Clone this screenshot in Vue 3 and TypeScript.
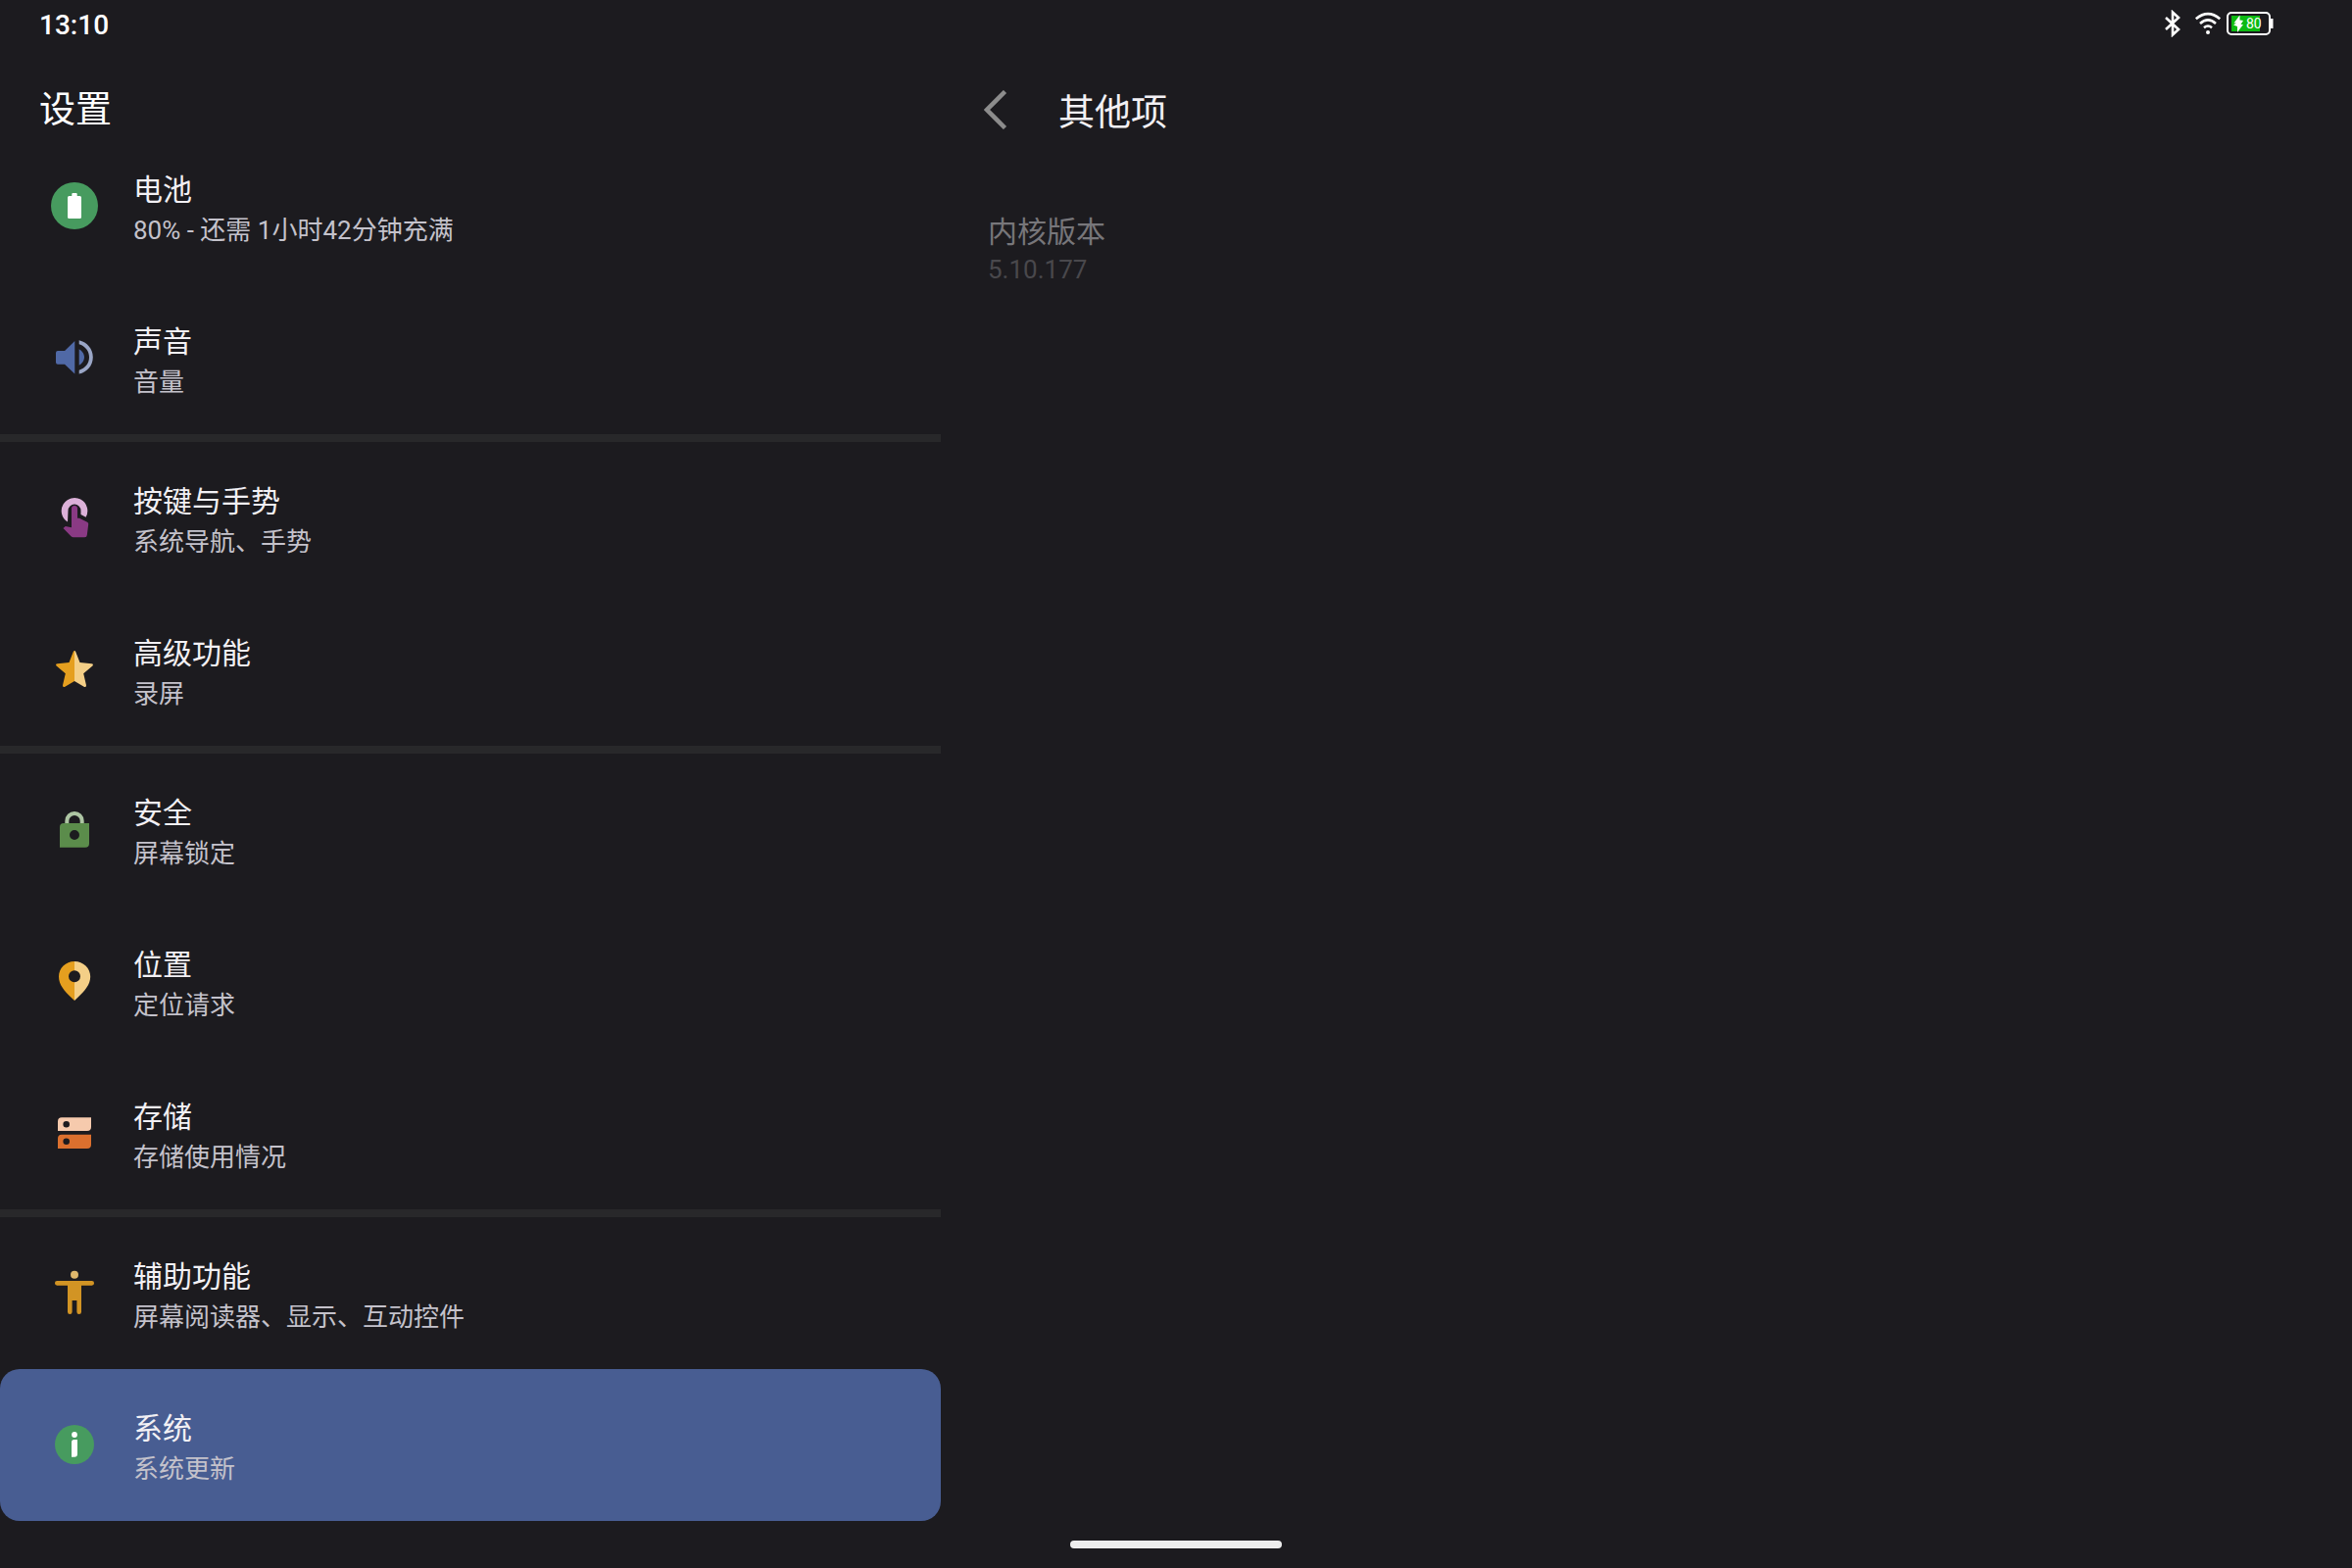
<script setup lang="ts">
import { ref } from 'vue'

type IconName =
  | 'battery' | 'sound' | 'gesture' | 'star' | 'lock'
  | 'location' | 'storage' | 'accessibility' | 'info'

interface SettingItem {
  icon: IconName
  title: string
  summary: string
}

const groups: SettingItem[][] = [
  [
    { icon: 'battery', title: '电池', summary: '80% - 还需 1小时42分钟充满' },
    { icon: 'sound', title: '声音', summary: '音量' },
  ],
  [
    { icon: 'gesture', title: '按键与手势', summary: '系统导航、手势' },
    { icon: 'star', title: '高级功能', summary: '录屏' },
  ],
  [
    { icon: 'lock', title: '安全', summary: '屏幕锁定' },
    { icon: 'location', title: '位置', summary: '定位请求' },
    { icon: 'storage', title: '存储', summary: '存储使用情况' },
  ],
  [
    { icon: 'accessibility', title: '辅助功能', summary: '屏幕阅读器、显示、互动控件' },
    { icon: 'info', title: '系统', summary: '系统更新' },
  ],
]

const selected = ref<IconName>('info')
</script>

<template>
  <div class="screen">
    <header class="status">
      <time class="clock">13:10</time>
      <div class="indicators">
        <svg class="bluetooth" viewBox="0 0 18 28" aria-hidden="true">
          <path d="M2 8 15 20 9 25.500V2.500L15 8 2 20" fill="none" stroke="#fff" stroke-width="2.600" />
        </svg>
        <svg class="wifi" viewBox="0 0 28 24" aria-hidden="true">
          <g fill="none" stroke="#fff" stroke-width="2.600">
            <path d="M1.800 7.200Q14-3 26.200 7.200" />
            <path d="M6 12Q14 4.800 22 12" />
            <path d="M10 16.200Q14 12.800 18 16.200" />
          </g>
          <circle cx="14" cy="21" r="2" fill="#fff" />
        </svg>
        <svg class="power" viewBox="0 0 48 26" aria-hidden="true">
          <rect x="1" y="2" width="43" height="22" rx="4" fill="none" stroke="#fff" stroke-width="2" />
          <path d="M45 8h2.500v10H45z" fill="#fff" />
          <path d="M5 5h29v16H5z" fill="#0dba12" />
          <path d="M13.500 4.500 7.500 12.500h2.500L7 14.500l4 1.500v6l6-8h-2.500l2.500-4-3.500-.500z" fill="#fff" />
          <text x="20" y="18" font-size="14" fill="#fff">80</text>
        </svg>
      </div>
    </header>

    <div class="panes">
      <nav class="sidebar" aria-label="设置">
        <h1 class="heading">设置</h1>
        <ul v-for="(group, index) in groups" :key="index" class="group">
          <li v-for="item in group" :key="item.icon">
            <button
              type="button"
              class="row"
              :class="{ active: selected === item.icon }"
              @click="selected = item.icon"
            >
              <svg class="icon" viewBox="0 0 48 48" aria-hidden="true">
                <g v-if="item.icon === 'battery'">
                  <circle cx="24" cy="24" r="24" fill="#479b5f" />
                  <path d="M21.300 14v-2a1 1 0 0 1 1-1h3.400a1 1 0 0 1 1 1v2H29.500a1.500 1.500 0 0 1 1.500 1.500v20a1.500 1.500 0 0 1-1.500 1.500h-11a1.500 1.500 0 0 1-1.500-1.500v-20a1.500 1.500 0 0 1 1.500-1.500z" fill="#fff" />
                </g>
                <g v-else-if="item.icon === 'sound'">
                  <path d="M7 17h7L24.300 7v33.500L14 30.800H7a2 2 0 0 1-2-2V19a2 2 0 0 1 2-2z" fill="#5069a6" />
                  <path d="M28.700 15.300c3 1.600 5.300 4.700 5.300 8.200s-2.300 6.600-5.300 8.200z" fill="#5069a6" />
                  <path d="M28.700 6.300C37 8.300 42.800 15 42.800 23.500S37 38.700 28.700 40.600v-3.900C35 34.800 39 29.700 39 23.500S35 12.200 28.700 10.300z" fill="#9aa6c6" />
                </g>
                <g v-else-if="item.icon === 'gesture'">
                  <path d="M17 28.600A13.300 13.300 0 1 1 35.600 23.800L30.500 21V17a6.500 6.500 0 0 0-13 0z" fill="#dcb1d9" />
                  <path d="M21 15a3 3 0 0 1 6 0v9.700h2l8 4a2 2 0 0 1 1.200 2.300L36.800 42a2.500 2.500 0 0 1-2.500 2.300H23a4 4 0 0 1-2.500-1L12.500 35l2.300-2 6.200 1.300z" fill="#8a3a84" />
                </g>
                <g v-else-if="item.icon === 'star'">
                  <path d="M24 5q-.800 0-1.200 1L18.500 17 6.500 18.200q-2.300.400-.900 2.300L14.800 28.300 12 40.300q-.200 2.300 1.900 1.600L24 36z" fill="#e59f1f" />
                  <path d="M24 5q.800 0 1.200 1l4.300 11 12 1.200q2.300.400.900 2.300L33.200 28.300 36 40.300q.200 2.300-1.900 1.600L24 36z" fill="#f4cf87" />
                </g>
                <g v-else-if="item.icon === 'lock'">
                  <path d="M16.300 19v-3.300a7.700 7.700 0 0 1 15.400 0V19" fill="none" stroke="#adc5a3" stroke-width="4" />
                  <path fill-rule="evenodd" d="M13 18h26v20.700a4 4 0 0 1-4 4H9V22a4 4 0 0 1 4-4zM24 25a5 5 0 1 0 0 10 5 5 0 0 0 0-10z" fill="#5b8c4b" />
                </g>
                <g v-else-if="item.icon === 'location'">
                  <path d="M24 4C15 4 8 11 8 19.500 8 29 15.500 36 24 44V25.300a6 6 0 0 1 0-12z" fill="#e59f1f" />
                  <path d="M24 4c9 0 16.200 7 16.200 15.500C40.200 29 32.500 36 24 44V25.300a6 6 0 0 0 0-12z" fill="#f4cf87" />
                </g>
                <g v-else-if="item.icon === 'storage'">
                  <path fill-rule="evenodd" d="M11 8.300h30V18a4 4 0 0 1-4 4H7v-9.700a4 4 0 0 1 4-4zM15.700 12a3.300 3.300 0 1 0 0 6.600 3.300 3.300 0 0 0 0-6.600z" fill="#f6caad" />
                  <path fill-rule="evenodd" d="M11 25.700h30V36a4 4 0 0 1-4 4H7V29.700a4 4 0 0 1 4-4zM15.700 29.400a3.300 3.300 0 1 0 0 6.600 3.300 3.300 0 0 0 0-6.600z" fill="#dc702e" />
                </g>
                <g v-else-if="item.icon === 'accessibility'">
                  <circle cx="24" cy="5.700" r="4" fill="#deb76c" />
                  <path d="M6.300 12h35.400a2.300 2.300 0 0 1 0 4.700H31v27a2.300 2.300 0 0 1-4.600 0V32h-4.800v11.700a2.300 2.300 0 0 1-4.600 0v-27H6.300a2.300 2.300 0 0 1 0-4.700z" fill="#d29424" />
                </g>
                <g v-else>
                  <circle cx="24" cy="24" r="20" fill="#479b5f" />
                  <circle cx="24" cy="14" r="2.900" fill="#fff" />
                  <path d="M23.500 19H27v14.700a3 3 0 0 1-3 3h-3V21.500a2.500 2.500 0 0 1 2.500-2.500z" fill="#fff" />
                </g>
              </svg>
              <span class="texts">
                <span class="title">{{ item.title }}</span>
                <span class="summary">{{ item.summary }}</span>
              </span>
            </button>
          </li>
        </ul>
      </nav>

      <main class="detail">
        <div class="toolbar">
          <button type="button" class="back" aria-label="返回">
            <svg viewBox="0 0 24 40" aria-hidden="true">
              <path d="M21.500 1.500 3 20l18.500 18.500" fill="none" stroke="#8c8c8c" stroke-width="4.500" />
            </svg>
          </button>
          <h2 class="heading-detail">其他项</h2>
        </div>
        <dl class="entry">
          <dt>内核版本</dt>
          <dd>5.10.177</dd>
        </dl>
      </main>
    </div>

    <div class="home-bar"></div>
  </div>
</template>

<style>
body {
  margin: 0;
  background: #1c1b1f;
}
</style>

<style scoped>
.screen {
  position: relative;
  display: flex;
  flex-direction: column;
  min-height: 100vh;
  background: #1c1b1f;
  color: #f2f0f4;
  font-family: Roboto, "Noto Sans CJK SC", sans-serif;
}

.status {
  display: flex;
  align-items: flex-start;
  justify-content: space-between;
  height: 48px;
  padding: 0 80px 0 40px;
}

.clock {
  color: #fff;
  font-size: 28px;
  font-weight: 500;
  line-height: 52px;
}

.indicators {
  display: flex;
  align-items: center;
  height: 48px;
}

.bluetooth {
  width: 18px;
  height: 28px;
  margin-right: 13px;
}

.wifi {
  width: 28px;
  height: 24px;
  margin-right: 5px;
}

.power {
  width: 48px;
  height: 26px;
}

.panes {
  display: flex;
  flex: 1;
}

.sidebar {
  flex: 0 0 40%;
}

.heading,
.heading-detail {
  margin: 0;
  font-size: 37px;
  font-weight: 400;
  line-height: 52px;
}

.heading {
  height: 46px;
  padding: 39px 40px 0;
  color: #fff;
}

.heading-detail {
  padding-top: 8px;
}

.group {
  margin: 0;
  padding: 0;
  list-style: none;
}

.group + .group {
  border-top: 8px solid #28282a;
}

.row {
  display: flex;
  align-items: flex-start;
  gap: 36px;
  width: 100%;
  height: 155px;
  padding: 0 52px;
  border: 0;
  border-radius: 20px;
  background: transparent;
  color: inherit;
  font: inherit;
  text-align: left;
}

.row.active {
  background: #485d92;
}

.icon {
  flex: none;
  width: 48px;
  height: 48px;
  margin-top: 53px;
}

.texts {
  display: flex;
  flex-direction: column;
  padding-top: 39px;
}

.title {
  font-size: 30px;
  line-height: 44px;
}

.summary {
  color: #c4c2cb;
  font-size: 26px;
  line-height: 38px;
}

.detail {
  flex: 1;
  padding: 34px 44px 0;
}

.toolbar {
  display: flex;
  align-items: center;
  gap: 52px;
}

.back {
  display: flex;
  padding: 0;
  border: 0;
  background: transparent;
}

.back svg {
  width: 24px;
  height: 40px;
}

.entry {
  margin: 73px 4px 0;
}

.entry dt {
  color: #77767a;
  font-size: 30px;
  line-height: 44px;
}

.entry dd {
  margin: 0;
  color: #49484c;
  font-size: 26px;
  line-height: 32px;
}

.home-bar {
  position: absolute;
  bottom: 20px;
  left: 50%;
  width: 216px;
  height: 8px;
  border-radius: 4px;
  background: #ededed;
  transform: translateX(-50%);
}
</style>
